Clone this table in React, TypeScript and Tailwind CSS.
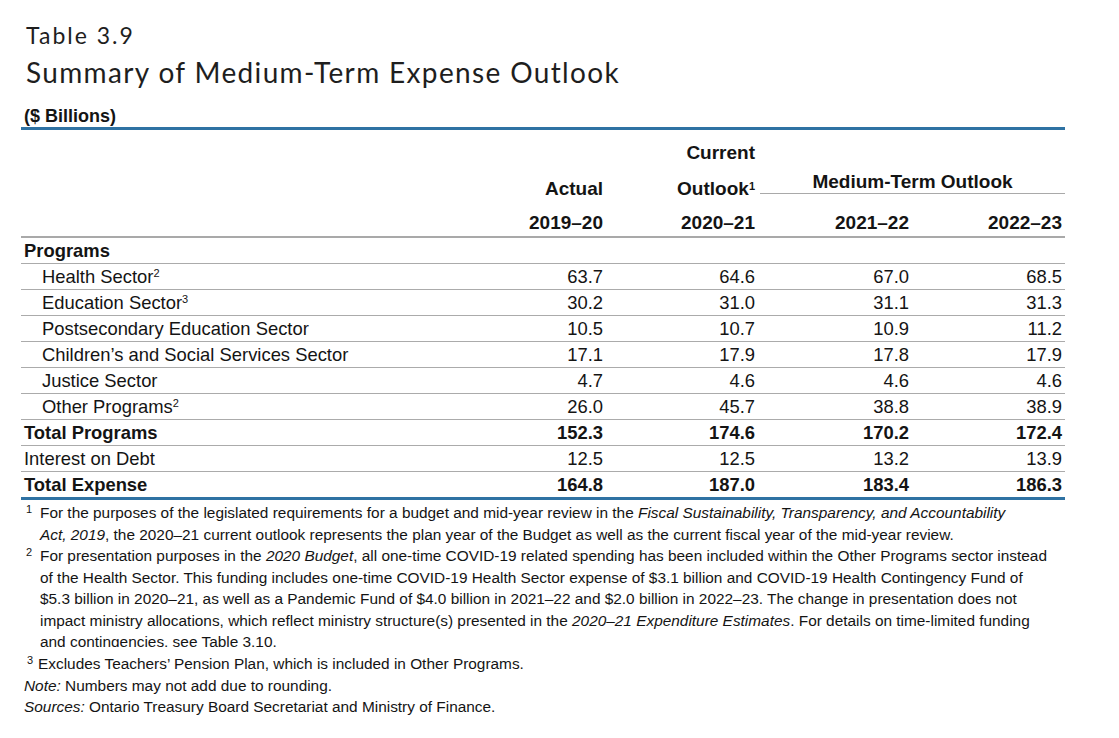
import type { ReactNode } from "react"

// ---------------------------------------------------------------------------

type Row = {
    label:  ReactNode
    values: string[] | null
    indent?: boolean
    bold?:   boolean
    last?:   boolean
}

function Sup({ n }: { n: string }) {
    return <sup className="text-[11px]">{n}</sup>
}

const rows: Row[] = [
    { label: "Programs", values: null, bold: true },
    { label: <>Health Sector<Sup n="2" /></>, values: ["63.7", "64.6", "67.0", "68.5"], indent: true },
    { label: <>Education Sector<Sup n="3" /></>, values: ["30.2", "31.0", "31.1", "31.3"], indent: true },
    { label: "Postsecondary Education Sector", values: ["10.5", "10.7", "10.9", "11.2"], indent: true },
    { label: "Children’s and Social Services Sector", values: ["17.1", "17.9", "17.8", "17.9"], indent: true },
    { label: "Justice Sector", values: ["4.7", "4.6", "4.6", "4.6"], indent: true },
    { label: <>Other Programs<Sup n="2" /></>, values: ["26.0", "45.7", "38.8", "38.9"], indent: true },
    { label: "Total Programs", values: ["152.3", "174.6", "170.2", "172.4"], bold: true },
    { label: "Interest on Debt", values: ["12.5", "12.5", "13.2", "13.9"] },
    { label: "Total Expense", values: ["164.8", "187.0", "183.4", "186.3"], bold: true, last: true },
]

const colW = ["w-[152px]", "w-[152px]", "w-[154px]", "w-[153px]"]

function Mark({ n }: { n: string }) {
    return <span className="shrink-0 w-[19px] pl-[5px] text-[11px] leading-[15px]">{n}</span>
}

// ---------------------------------------------------------------------------

export default function App() {
    return (
        <div className="w-[1119px] h-[738px] bg-white overflow-hidden text-[#141414] font-['Liberation_Sans',Arial,sans-serif]">
            {/* Title */}
            <div className="pl-[26px] pt-[21px] font-['Lato','Open_Sans',sans-serif] text-[#1e1e1e]">
                <div className="text-[23px] leading-[28px] tracking-[2px]">Table 3.9</div>
                <div className="mt-[6px] text-[28px] leading-[34px] tracking-[1.35px]">Summary of Medium-Term Expense Outlook</div>
            </div>

            <div className="ml-[21px] w-[1044px]">
                <div className="pl-[3px] mt-[16px] text-[18px] leading-[22px] font-bold">($ Billions)</div>

                {/* Header */}
                <div className="border-t-[3px] border-[#2f72a3] border-b-2 border-b-[#a9a9a9] h-[111px] flex text-[19px] leading-[22px] font-bold">
                    <div className="flex-1" />
                    <div className={`${colW[0]} pr-[3px] pt-[12px] flex flex-col items-end`}>
                        <div className="h-[22px]" />
                        <div className="mt-[14px]">Actual</div>
                        <div className="mt-[12px]">2019–20</div>
                    </div>
                    <div className={`${colW[1]} pr-[3px] pt-[12px] flex flex-col items-end`}>
                        <div>Current</div>
                        <div className="mt-[14px]">Outlook<Sup n="1" /></div>
                        <div className="mt-[12px]">2020–21</div>
                    </div>
                    <div className="w-[307px] pt-[41px] flex flex-col">
                        <div className="h-[23px] border-b border-[#a9a9a9] ml-[2px] text-center">Medium-Term Outlook</div>
                        <div className="mt-[18px] flex">
                            <div className={`${colW[2]} pr-[3px] text-right`}>2021–22</div>
                            <div className={`${colW[3]} pr-[3px] text-right`}>2022–23</div>
                        </div>
                    </div>
                </div>

                {/* Body */}
                {rows.map((r, i) => (
                    <div
                        key={i}
                        className={`flex items-center text-[18.4px] leading-[22px] ${r.last ? "h-[28px] border-b-[3px] border-[#2f72a3]" : "h-[26px] border-b border-[#ababab]"} ${r.bold ? "font-bold" : ""}`}
                    >
                        <div className={`flex-1 ${r.indent ? "pl-[21px]" : "pl-[3px]"}`}>{r.label}</div>
                        {r.values && r.values.map((v, j) => (
                            <div key={j} className={`${colW[j]} pr-[3px] text-right`}>{v}</div>
                        ))}
                    </div>
                ))}

                {/* Footnotes */}
                <div className="mt-[2px] text-[15.4px] leading-[21.5px]">
                    <div className="flex">
                        <Mark n="1" />
                        <div>
                            <div className="whitespace-nowrap">For the purposes of the legislated requirements for a budget and mid-year review in the <i>Fiscal Sustainability, Transparency, and Accountability</i></div>
                            <div className="whitespace-nowrap"><i>Act, 2019</i>, the 2020–21 current outlook represents the plan year of the Budget as well as the current fiscal year of the mid-year review.</div>
                        </div>
                    </div>
                    <div className="flex h-[102px] overflow-hidden">
                        <Mark n="2" />
                        <div>
                            <div className="whitespace-nowrap">For presentation purposes in the <i>2020 Budget</i>, all one-time COVID-19 related spending has been included within the Other Programs sector instead</div>
                            <div className="whitespace-nowrap">of the Health Sector. This funding includes one-time COVID-19 Health Sector expense of $3.1 billion and COVID-19 Health Contingency Fund of</div>
                            <div className="whitespace-nowrap">$5.3 billion in 2020–21, as well as a Pandemic Fund of $4.0 billion in 2021–22 and $2.0 billion in 2022–23. The change in presentation does not</div>
                            <div className="whitespace-nowrap">impact ministry allocations, which reflect ministry structure(s) presented in the <i>2020–21 Expenditure Estimates</i>. For details on time-limited funding</div>
                            <div className="whitespace-nowrap">and contingencies, see Table 3.10.</div>
                        </div>
                    </div>
                    <div className="mt-[6px] flex">
                        <span className="shrink-0 w-[17px] pl-[6px] text-[11px] leading-[15px]">3</span>
                        <div>Excludes Teachers’ Pension Plan, which is included in Other Programs.</div>
                    </div>
                    <div className="pl-[3px]"><i>Note:</i> Numbers may not add due to rounding.</div>
                    <div className="pl-[3px]"><i>Sources:</i> Ontario Treasury Board Secretariat and Ministry of Finance.</div>
                </div>
            </div>
        </div>
    )
}
